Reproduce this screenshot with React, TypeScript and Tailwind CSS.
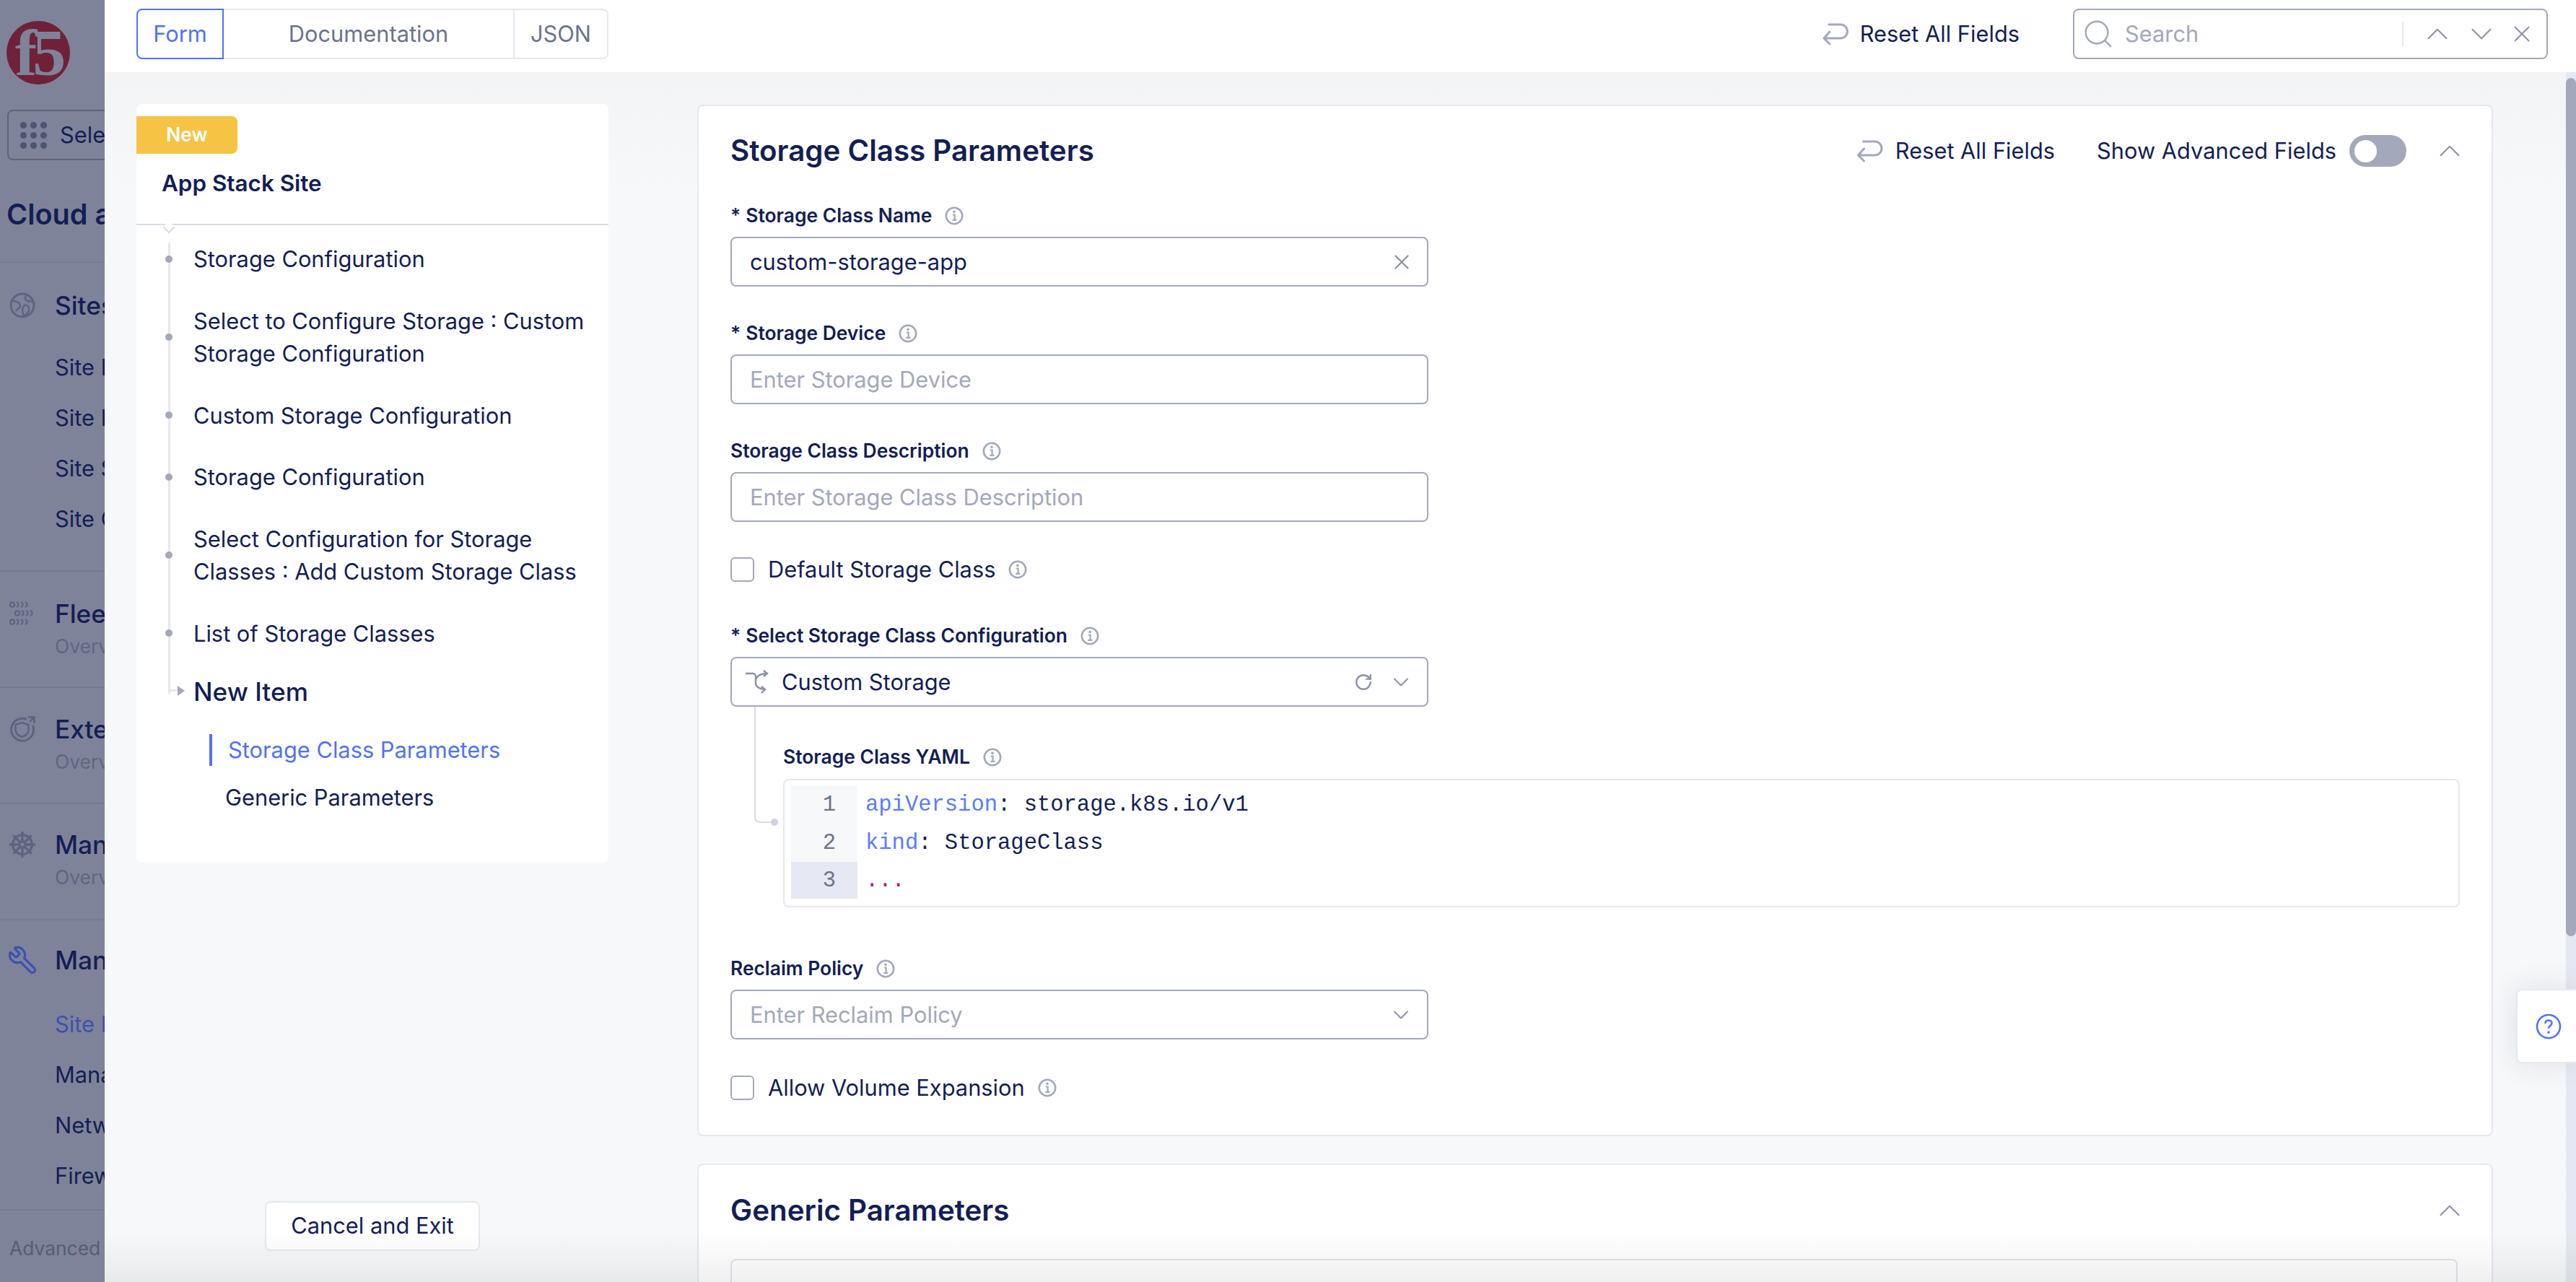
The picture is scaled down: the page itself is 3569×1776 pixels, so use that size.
import { ChevronDown, ChevronUp, RotateCw, Search, ShipWheel, Wrench, X } from "lucide-react";
import type { ReactNode } from "react";

const font = { fontFamily: "Inter, 'Noto Sans', sans-serif" };

function InfoIcon({ className = "" }: { className?: string }) {
  return (
    <svg viewBox="0 0 26 26" className={`h-[26px] w-[26px] shrink-0 text-[#a3a9bb] ${className}`} fill="none" stroke="currentColor">
      <circle cx="13" cy="13" r="11.200" strokeWidth="2.600" />
      <path d="M10.800 11.500h2.800v7M10.400 18.800h6" strokeWidth="2.200" />
      <circle cx="13" cy="7.400" r="1.800" fill="currentColor" stroke="none" />
    </svg>
  );
}

function ResetIcon({ className = "" }: { className?: string }) {
  return (
    <svg viewBox="0 0 36 32" className={`text-[#a3a9bb] ${className}`} fill="none" stroke="currentColor" strokeWidth="3" strokeLinecap="round" strokeLinejoin="round">
      <path d="M9 3h16a9.500 9.500 0 0 1 0 19H2M10 13l-8 9 8 8" />
    </svg>
  );
}

function RouteIcon() {
  return (
    <svg viewBox="0 0 32 34" className="h-[34px] w-[32px] text-[#8d93a8]" fill="none" stroke="currentColor" strokeWidth="2.400">
      <path d="M0 5h10c3 0 4 2 4 5v8c0 4 3 8 12 9M25 1l5 4-5 4M14 16c0-5 3-10 14-11M22 23l5 4-5 5" />
    </svg>
  );
}

function FleetRow({ y, x }: { y: number; x: number }) {
  return (
    <g transform={`translate(${x} ${y})`}>
      <circle cx="4" cy="4.500" r="3.200" />
      <path d="M10 1c2 1 2.500 2.500 2.500 3.500S12 7 10 8M16 1c2 1 2.500 2.500 2.500 3.500S18 7 16 8M22 1c2 1 2.500 2.500 2.500 3.500S24 7 22 8" />
    </g>
  );
}

function FleetIcon() {
  return (
    <svg viewBox="0 0 36 34" className="h-[34px] w-[36px] text-[#5d6480]" fill="none" stroke="currentColor" strokeWidth="2.200">
      <FleetRow x={0} y={0} />
      <FleetRow x={7} y={12} />
      <FleetRow x={0} y={24} />
    </svg>
  );
}

function SitesIcon() {
  return (
    <svg viewBox="0 0 36 36" className="h-[36px] w-[36px] text-[#5d6480]" fill="none" stroke="currentColor" strokeWidth="3">
      <circle cx="18" cy="18" r="16" />
      <path d="M5 12c6 0 10 3 10 7s-5 3-6 7M24 3c-3 4-3 7 1 9 4 1 8 0 9 2M21 18c4-1 7 2 6 7-1 3-4 6-7 8-2-5-3-12 1-15z" strokeWidth="2.400" />
    </svg>
  );
}

function ShieldIcon() {
  return (
    <svg viewBox="0 0 36 36" className="h-[36px] w-[36px] text-[#5d6480]" fill="none" stroke="currentColor" strokeWidth="3">
      <path d="M24 4.500A15.500 15.500 0 1 0 33.500 18c0-2-.3-3.500-1-5" />
      <path d="M17.500 9l9 3v7c0 5-4 8-9 10-5-2-9-5-9-10v-7z" strokeWidth="2.600" />
      <path d="M26 1.500h8.500v8.500M34 2l-6 6" strokeWidth="2.600" />
    </svg>
  );
}

function NavTitle({ icon, label, blue }: { icon: ReactNode; label: string; blue?: boolean }) {
  return (
    <div className="flex h-[46px] items-center whitespace-nowrap">
      <div className={`flex w-[76px] shrink-0 pl-[13px] ${blue ? "text-[#3d51b0]" : ""}`}>{icon}</div>
      <span className="text-[35.2px] font-medium text-[#141e55]">{label}</span>
    </div>
  );
}

function NavItem({ label, blue }: { label: string; blue?: boolean }) {
  return (
    <div className={`flex h-[70px] items-center pl-[76px] text-[30.8px] whitespace-nowrap ${blue ? "text-[#3d51b0]" : "text-[#141e55]"}`}>
      {label}
    </div>
  );
}

function NavSub() {
  return <div className="flex h-[46px] items-center pl-[76px] text-[26.4px] whitespace-nowrap text-[#5f6583]">Overview</div>;
}

function Sidebar() {
  return (
    <aside className="flex h-full w-[145px] shrink-0 flex-col overflow-hidden bg-[#7f8399]">
      <div className="ml-[9px] mt-[29px] flex h-[88px] w-[88px] shrink-0 items-center justify-center overflow-hidden rounded-full bg-[#6f2139] text-[92px] leading-none font-bold tracking-[-6px] text-[#7f8399]" style={{ fontFamily: "'Liberation Serif', serif" }}>
        f5
      </div>
      <div className="ml-[10px] mt-[35px] flex h-[70px] w-[300px] shrink-0 items-center rounded-[8px] border-2 border-[#5d6480] pl-[16px]">
        <div className="grid grid-cols-3 gap-[5px]">
          {Array.from({ length: 9 }).map((_, i) => (
            <span key={i} className="h-[9px] w-[9px] rounded-full bg-[#4d5472]" />
          ))}
        </div>
        <span className="ml-[18px] text-[30.8px] whitespace-nowrap text-[#141e55]">Select</span>
      </div>
      <div className="ml-[9px] mt-[52px] h-[46px] shrink-0 text-[39.6px] leading-[46px] font-semibold whitespace-nowrap text-[#141e55]">
        Cloud and Edge
      </div>
      <div className="mt-[42px] flex h-[428px] shrink-0 flex-col border-t-2 border-[#757a92] pt-[36px]">
        <NavTitle icon={<SitesIcon />} label="Sites" />
        <div className="mt-[28px]">
          <NavItem label="Site List" />
          <NavItem label="Site Inventory" />
          <NavItem label="Site Status" />
          <NavItem label="Site Connectivity" />
        </div>
      </div>
      <div className="flex h-[161px] shrink-0 flex-col border-t-2 border-[#757a92] pt-[35px]">
        <NavTitle icon={<FleetIcon />} label="Fleet" />
        <NavSub />
      </div>
      <div className="flex h-[161px] shrink-0 flex-col border-t-2 border-[#757a92] pt-[34px]">
        <NavTitle icon={<ShieldIcon />} label="External" />
        <NavSub />
      </div>
      <div className="flex h-[161px] shrink-0 flex-col border-t-2 border-[#757a92] pt-[33px]">
        <NavTitle icon={<ShipWheel className="-ml-[2px] h-[40px] w-[40px] text-[#5d6480]" strokeWidth={2} />} label="Manage" />
        <NavSub />
      </div>
      <div className="flex h-[402px] shrink-0 flex-col border-t-2 border-[#757a92] pt-[32px]">
        <NavTitle icon={<Wrench className="-ml-[3px] h-[42px] w-[42px] -scale-x-100" strokeWidth={1.8} />} label="Manage" blue />
        <div className="mt-[31px]">
          <NavItem label="Site Inventory" blue />
          <NavItem label="Manage" />
          <NavItem label="Networking" />
          <NavItem label="Firewall" />
        </div>
      </div>
      <div className="flex h-[101px] shrink-0 border-t-2 border-[#757a92] pl-[13px] pt-[29px] text-[26.4px] leading-[46px] whitespace-nowrap text-[#565c78]">
        Advanced
      </div>
    </aside>
  );
}

function TopBar() {
  return (
    <header className="flex h-[100px] shrink-0 items-start bg-white pl-[44px] pt-[12px]">
      <div className="flex h-[70px] w-[654px] text-[30.8px]">
        <div className="flex w-[121px] items-center justify-center rounded-l-[8px] border-2 border-[#5272f5] text-[#5272f5]">Form</div>
        <div className="flex w-[403px] items-center justify-center border-y-2 border-r-2 border-[#e6e8f1] text-[#6c738c]">Documentation</div>
        <div className="flex w-[130px] items-center justify-center rounded-r-[8px] border-y-2 border-r-2 border-[#e6e8f1] text-[#6c738c]">JSON</div>
      </div>
      <div className="ml-auto flex h-[70px] items-center">
        <ResetIcon className="h-[32px] w-[36px]" />
        <span className="ml-[16px] text-[30.8px] text-[#141e55]">Reset All Fields</span>
      </div>
      <div className="ml-[74px] mr-[39px] flex h-[70px] w-[658px] items-center rounded-[8px] border-2 border-[#a3a9bb] pl-[10px] pr-[15px]">
        <Search className="h-[46px] w-[46px] text-[#a3a9bb]" strokeWidth={1.3} />
        <span className="ml-[14px] text-[30.8px] text-[#a3a9bb]">Search</span>
        <div className="ml-auto h-[34px] w-[2px] bg-[#e6e8f1]" />
        <ChevronUp className="ml-[22px] h-[50px] w-[50px] text-[#8d93a8]" strokeWidth={1} />
        <ChevronDown className="ml-[11px] h-[50px] w-[50px] text-[#8d93a8]" strokeWidth={1} />
        <X className="ml-[12px] h-[38px] w-[38px] text-[#8d93a8]" strokeWidth={1.3} />
      </div>
    </header>
  );
}

function Step({ children }: { children: ReactNode }) {
  return (
    <div className="relative pl-[79px] text-[30.8px] leading-[45.5px] text-[#141e55]">
      <span className="absolute left-[40px] top-1/2 h-[10px] w-[10px] -translate-y-1/2 rounded-full bg-[#a3a9bb]" />
      {children}
    </div>
  );
}

function StepsCard() {
  return (
    <div className="relative h-[1051px] rounded-[8px] bg-white pt-[17px]">
      <div className="flex h-[52px] w-[140px] items-center justify-center rounded-r-[8px] bg-[#f6c344] text-[26.4px] font-semibold text-white">New</div>
      <div className="ml-[35px] mt-[18px] h-[46px] text-[31.4px] leading-[46px] font-semibold text-[#141e55]">App Stack Site</div>
      <div className="relative mt-[33px] h-[2px] bg-[#d8dbe8]">
        <div className="absolute left-[39px] top-[-1px] h-[12px] w-[12px] rotate-45 border-b-2 border-r-2 border-[#d8dbe8] bg-white" />
      </div>
      <div className="relative mt-[24px] flex flex-col gap-[40px]">
        <div className="absolute left-[44px] top-0 h-[625px] w-[3px] bg-[#e6e8f1]" />
        <Step>Storage Configuration</Step>
        <Step>
          Select to Configure Storage : Custom
          <br />
          Storage Configuration
        </Step>
        <Step>Custom Storage Configuration</Step>
        <Step>Storage Configuration</Step>
        <Step>
          Select Configuration for Storage
          <br />
          Classes : Add Custom Storage Class
        </Step>
        <Step>List of Storage Classes</Step>
      </div>
      <div className="relative mt-[35px] h-[46px] pl-[79px] text-[35.2px] leading-[46px] font-medium text-[#141e55]">
        <div className="absolute left-[44px] top-[20px] h-[3px] w-[14px] bg-[#e6e8f1]" />
        <div className="absolute left-[57px] top-[15px] h-0 w-0 border-y-[7px] border-l-[10px] border-y-transparent border-l-[#a3a9bb]" />
        New Item
      </div>
      <div className="ml-[101px] mt-[36px] flex h-[44px] items-center border-l-4 border-[#5272f5] pl-[22px] text-[30.8px] text-[#5272f5]">
        Storage Class Parameters
      </div>
      <div className="ml-[123px] mt-[22px] text-[30.8px] leading-[44px] text-[#141e55]">Generic Parameters</div>
    </div>
  );
}

function Label({ children, required }: { children: string; required?: boolean }) {
  return (
    <div className="flex h-[36px] items-center text-[26.4px] font-semibold text-[#141e55]">
      {required ? <span className="mr-[7px]">*</span> : null}
      {children}
      <InfoIcon className="ml-[18px]" />
    </div>
  );
}

function Field({ placeholder, value, right }: { placeholder?: string; value?: string; right?: ReactNode }) {
  return (
    <div className="mt-[11px] flex h-[69px] w-[967px] items-center rounded-[8px] border-2 border-[#a3a9bb] pl-[25px] pr-[18px] text-[30.8px]">
      {value ? <span className="pt-[2px] text-[#141e55]">{value}</span> : <span className="pt-[2px] text-[#a3a9bb]">{placeholder}</span>}
      <div className="ml-auto flex items-center">{right}</div>
    </div>
  );
}

function CheckRow({ label, className }: { label: string; className: string }) {
  return (
    <div className={`flex h-[34px] items-center ${className}`}>
      <span className="h-[34px] w-[33px] rounded-[6px] border-2 border-[#a3a9bb]" />
      <span className="ml-[19px] text-[30.8px] text-[#141e55]">{label}</span>
      <InfoIcon className="ml-[18px]" />
    </div>
  );
}

function YamlEditor() {
  const mono = { fontFamily: "'Liberation Mono', monospace" };
  return (
    <div className="mt-[12px] flex h-[178px] w-[2323px] rounded-[8px] border-2 border-[#e6e8f1] py-[7px] pl-[9px]">
      <div className="w-[92px] text-[30.5px] text-[#6e7488]" style={mono}>
        <div className="flex h-[53px] items-center justify-end bg-[#f7f8fa] pr-[30px] pt-[2px]">1</div>
        <div className="flex h-[53px] items-center justify-end bg-[#f7f8fa] pr-[30px] pt-[2px]">2</div>
        <div className="flex h-[51px] items-center justify-end bg-[#e6e9f3] pr-[30px] pt-[2px]">3</div>
      </div>
      <div className="pl-[11px] text-[30.5px] text-[#141e55]" style={mono}>
        <div className="flex h-[53px] items-center whitespace-pre pt-[2px]">
          <span className="text-[#5b7cfa]">apiVersion</span>: storage.k8s.io/v1
        </div>
        <div className="flex h-[53px] items-center whitespace-pre pt-[2px]">
          <span className="text-[#5b7cfa]">kind</span>: StorageClass
        </div>
        <div className="flex h-[51px] items-center pt-[2px] text-[#a31d8f]">...</div>
      </div>
    </div>
  );
}

function ParametersCard() {
  return (
    <section className="rounded-[8px] border-2 border-[#e6e8f1] bg-white px-[44px] pb-[48px] pt-[39px]">
      <div className="flex h-[46px] items-center">
        <h2 className="text-[40.3px] font-semibold text-[#141e55]">Storage Class Parameters</h2>
        <ResetIcon className="ml-auto h-[32px] w-[37px]" />
        <span className="ml-[17px] text-[30.8px] text-[#141e55]">Reset All Fields</span>
        <span className="ml-[58px] text-[30.8px] text-[#141e55]">Show Advanced Fields</span>
        <div className="ml-[18px] flex h-[44px] w-[79px] items-center rounded-full bg-[#a3a9bb] pl-[7px]">
          <span className="h-[31px] w-[31px] rounded-full bg-white" />
        </div>
        <ChevronUp className="ml-[35px] mr-[-11px] h-[50px] w-[50px] text-[#8d93a8]" strokeWidth={1} />
      </div>
      <div className="mt-[49px]">
        <Label required>Storage Class Name</Label>
        <Field value="custom-storage-app" right={<X className="h-[34px] w-[34px] text-[#8d93a8]" strokeWidth={1.6} />} />
      </div>
      <div className="mt-[47px]">
        <Label required>Storage Device</Label>
        <Field placeholder="Enter Storage Device" />
      </div>
      <div className="mt-[47px]">
        <Label>Storage Class Description</Label>
        <Field placeholder="Enter Storage Class Description" />
      </div>
      <CheckRow label="Default Storage Class" className="mt-[49px]" />
      <div className="mt-[57px]">
        <Label required>Select Storage Class Configuration</Label>
        <div className="mt-[11px] flex h-[69px] w-[967px] items-center rounded-[8px] border-2 border-[#a3a9bb] pl-[19px] pr-[18px] text-[30.8px] text-[#141e55]">
          <RouteIcon />
          <span className="ml-[18px] pt-[2px]">Custom Storage</span>
          <RotateCw className="ml-auto h-[26px] w-[26px] text-[#8d93a8]" strokeWidth={2.2} />
          <ChevronDown className="ml-[21px] h-[36px] w-[36px] text-[#8d93a8]" strokeWidth={1.4} />
        </div>
      </div>
      <div className="relative pl-[73px] pt-[52px]">
        <div className="absolute left-[33px] top-0 h-[161px] w-[24px] rounded-bl-[8px] border-b-2 border-l-2 border-[#d8dbe8]" />
        <span className="absolute left-[56px] top-[155px] h-[10px] w-[10px] rounded-full bg-[#cdd2e2]" />
        <Label>Storage Class YAML</Label>
        <YamlEditor />
      </div>
      <div className="mt-[67px]">
        <Label>Reclaim Policy</Label>
        <Field placeholder="Enter Reclaim Policy" right={<ChevronDown className="h-[36px] w-[36px] text-[#8d93a8]" strokeWidth={1.4} />} />
      </div>
      <CheckRow label="Allow Volume Expansion" className="mt-[50px]" />
    </section>
  );
}

function GenericCard() {
  return (
    <section className="mt-[38px] h-[400px] rounded-[8px] border-2 border-[#e6e8f1] bg-white px-[44px] pt-[40px]">
      <div className="flex h-[46px] items-center">
        <h2 className="text-[40.3px] font-semibold text-[#141e55]">Generic Parameters</h2>
        <ChevronUp className="ml-auto mr-[-11px] h-[50px] w-[50px] text-[#8d93a8]" strokeWidth={1} />
      </div>
      <div className="mt-[44px] h-[200px] w-[2393px] rounded-[8px] border-2 border-[#e0e3ee]" />
    </section>
  );
}

export default function App() {
  return (
    <div className="relative flex h-[1776px] w-[3569px] overflow-hidden bg-[#f7f8fa]" style={font}>
      <Sidebar />
      <main className="flex h-full min-w-0 flex-1 flex-col">
        <TopBar />
        <div className="flex min-h-0 flex-1 bg-gradient-to-b from-[#f3f4f6] to-[#f7f8fa] to-[10%]">
          <div className="ml-[44px] flex w-[654px] shrink-0 flex-col pt-[44px]">
            <StepsCard />
            <button className="mx-auto mt-[469px] h-[69px] w-[298px] rounded-[8px] border-2 border-[#e6e8f1] bg-white text-[30.8px] text-[#141e55]">
              Cancel and Exit
            </button>
          </div>
          <div className="ml-[123px] w-[2488px] shrink-0 pt-[45px]">
            <ParametersCard />
            <GenericCard />
          </div>
        </div>
      </main>
      <div className="absolute bottom-0 right-0 top-[100px] w-[14px] bg-[#e6e8f1]">
        <div className="mt-[8px] h-[1189px] rounded-full bg-[#a3a9bb]" />
      </div>
      <div className="absolute left-[3486px] top-[1370px] flex h-[103px] w-[83px] items-center rounded-l-[8px] border-2 border-r-0 border-[#e6e8f1] bg-white pl-[25px] shadow-[0_0_40px_rgba(40,50,90,0.12)]">
        <svg viewBox="0 0 36 36" className="h-[36px] w-[36px] text-[#5272f5]" fill="none" stroke="currentColor" strokeWidth="2.600">
          <circle cx="18" cy="18" r="16" />
          <path d="M13.500 14c0-3 2-4.500 4.500-4.500s4.500 1.500 4.500 4c0 3.500-4.500 3.500-4.500 7" />
          <circle cx="18" cy="26" r="1.800" fill="currentColor" stroke="none" />
        </svg>
      </div>
      <div className="pointer-events-none absolute bottom-0 left-[145px] right-0 h-[70px] bg-gradient-to-b from-transparent to-[rgba(0,0,0,0.06)]" />
    </div>
  );
}
